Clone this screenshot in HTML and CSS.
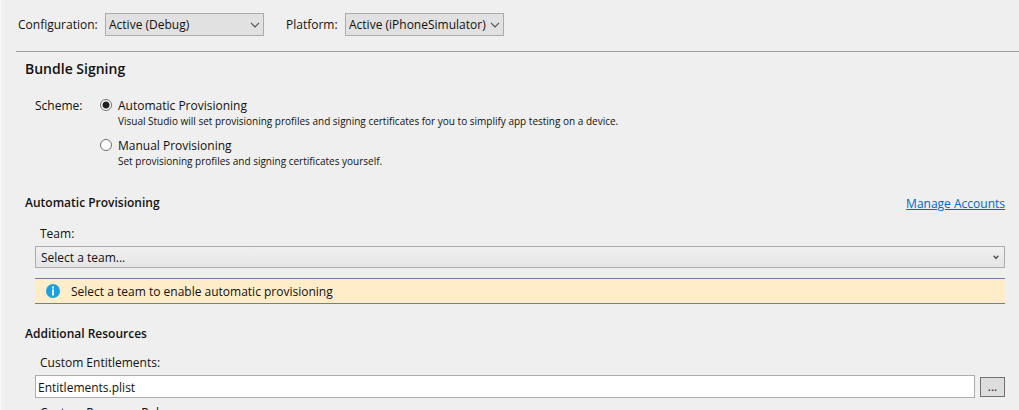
FILE: index.html
```html
<!DOCTYPE html>
<html lang="en">
<head>
<meta charset="utf-8">
<title>Bundle Signing</title>
<link rel="stylesheet" href="styles.css">
</head>
<body>
<form class="page">
  <header class="toolbar">
    <label class="toolbar-label" for="configuration">Configuration:</label>
    <span class="picker">
      <select class="select" id="configuration"><option>Active (Debug)</option></select>
      <svg class="chevron" width="10" height="6" viewBox="0 0 10 6" aria-hidden="true"><path d="M1 .8 5 4.8 9 .8"/></svg>
    </span>
    <label class="toolbar-label platform-label" for="platform">Platform:</label>
    <span class="picker">
      <select class="select" id="platform"><option>Active (iPhoneSimulator)</option></select>
      <svg class="chevron" width="10" height="6" viewBox="0 0 10 6" aria-hidden="true"><path d="M1 .8 5 4.8 9 .8"/></svg>
    </span>
  </header>
  <main class="content">
    <h1 class="title">Bundle Signing</h1>
    <div class="scheme" role="radiogroup" aria-labelledby="scheme-label">
      <span class="scheme-label" id="scheme-label">Scheme:</span>
      <div class="options">
        <div class="option">
          <input class="radio" type="radio" name="scheme" id="automatic" checked>
          <div class="option-text">
            <label for="automatic">Automatic Provisioning</label>
            <p class="hint">Visual Studio will set provisioning profiles and signing certificates for you to simplify app testing on a device.</p>
          </div>
        </div>
        <div class="option">
          <input class="radio" type="radio" name="scheme" id="manual">
          <div class="option-text">
            <label for="manual">Manual Provisioning</label>
            <p class="hint">Set provisioning profiles and signing certificates yourself.</p>
          </div>
        </div>
      </div>
    </div>
    <section class="section">
      <div class="section-head">
        <h2 class="heading">Automatic Provisioning</h2>
        <a class="link" href="#">Manage Accounts</a>
      </div>
      <div class="fields">
        <label class="field-label" for="team">Team:</label>
        <span class="picker team-picker">
          <select class="select team" id="team"><option>Select a team...</option></select>
          <svg class="chevron team-chevron" width="6" height="5" viewBox="0 0 6 5" aria-hidden="true"><path d="M.7 .8 3 3.4 5.3 .8"/></svg>
        </span>
        <div class="notice" role="status">
          <svg width="14" height="14" viewBox="0 0 14 14" aria-hidden="true"><circle cx="7" cy="7" r="7" fill="#1ba1e2"/><path d="M6 2.5h2v2H6zM6 5.5h2v6H6z" fill="#fff"/></svg>
          <span class="notice-text">Select a team to enable automatic provisioning</span>
        </div>
      </div>
    </section>
    <section class="section">
      <h2 class="heading">Additional Resources</h2>
      <div class="fields">
        <label class="field-label" for="entitlements">Custom Entitlements:</label>
        <div class="file-row">
          <input class="text" type="text" id="entitlements" value="Entitlements.plist">
          <button class="browse" type="button" aria-label="Browse">...</button>
        </div>
        <span class="field-label next-label">Custom Resource Rules:</span>
      </div>
    </section>
  </main>
</form>
</body>
</html>
```
FILE: styles.css
```css
* {
  box-sizing: border-box;
}

body {
  margin: 0;
  height: 100vh;
  overflow: hidden;
  background: #efefef;
  border-left: 1px solid #fafafc;
  color: #111;
  font: 12px/16px "Open Sans", "Noto Sans", sans-serif;
}

select,
input,
button {
  margin: 0;
  color: inherit;
  font: inherit;
}

h1,
h2,
p {
  margin: 0;
}

.toolbar {
  display: flex;
  align-items: center;
  margin-left: 15px;
  padding: 13px 0 15px 2px;
  border-bottom: 1px solid #a0a0a0;
}

.toolbar-label {
  width: 87px;
}

.platform-label {
  width: 59px;
  margin-left: 22px;
}

.picker {
  display: grid;
  align-items: center;
  width: 159px;
}

.select,
.chevron {
  grid-area: 1 / 1;
}

.select {
  appearance: none;
  width: 100%;
  height: 23px;
  padding: 0 3px;
  border: 1px solid #acacac;
  border-radius: 0;
  background: #e1e1e1;
}

.chevron {
  justify-self: end;
  margin-right: 4px;
  fill: none;
  stroke: #505050;
  stroke-width: 1.2;
  pointer-events: none;
}

.content {
  padding: 7px 14px 0 24px;
}

.title {
  font-size: 14px;
  font-weight: 600;
  line-height: 20px;
}

.scheme {
  display: flex;
  margin: 19px 0 0 10px;
}

.scheme-label {
  width: 65px;
}

.options {
  display: grid;
  gap: 10px;
}

.option {
  display: flex;
  gap: 6px;
}

.radio {
  appearance: none;
  width: 12px;
  height: 12px;
  margin-top: 1px;
  border: 1px solid #707070;
  border-radius: 50%;
  background: #fff;
}

.radio:checked {
  background: radial-gradient(circle, #212121 3px, #fff 4px);
}

.option-text {
  display: grid;
}

.hint {
  font-size: 10px;
  line-height: 14px;
}

.section {
  margin-top: 20px;
}

.scheme + .section {
  margin-top: 25px;
}

.section-head {
  display: flex;
  justify-content: space-between;
}

.heading {
  font-size: 12px;
  font-weight: 600;
  line-height: 20px;
}

.link {
  color: #0066cc;
  line-height: 22px;
}

.fields {
  margin-left: 10px;
}

.field-label {
  display: block;
  margin: 11px 5px 4px;
}

.team-picker {
  width: 100%;
}

.team {
  height: 22px;
  padding: 2px 5px 0;
  background: linear-gradient(#f0f0f0, #e5e5e5);
}

.team-chevron {
  margin-right: 6px;
  stroke-width: 1.4;
}

.notice {
  display: flex;
  align-items: center;
  gap: 11px;
  height: 26px;
  margin-top: 10px;
  padding-left: 11px;
  border: solid #717c9f;
  border-width: 1px 0;
  background: #ffecc8;
}

.notice-text {
  padding-top: 2px;
}

.file-row {
  display: flex;
  align-items: center;
  gap: 5px;
}

.text {
  flex: 1;
  height: 23px;
  padding: 2px 2px 0;
  border: 1px solid #abadb3;
  background: #fff;
}

.browse {
  width: 25px;
  height: 20px;
  padding: 0;
  border: 1px solid #707070;
  background: #ddd;
  line-height: 16px;
}

.next-label {
  margin-top: 7px;
}
```
